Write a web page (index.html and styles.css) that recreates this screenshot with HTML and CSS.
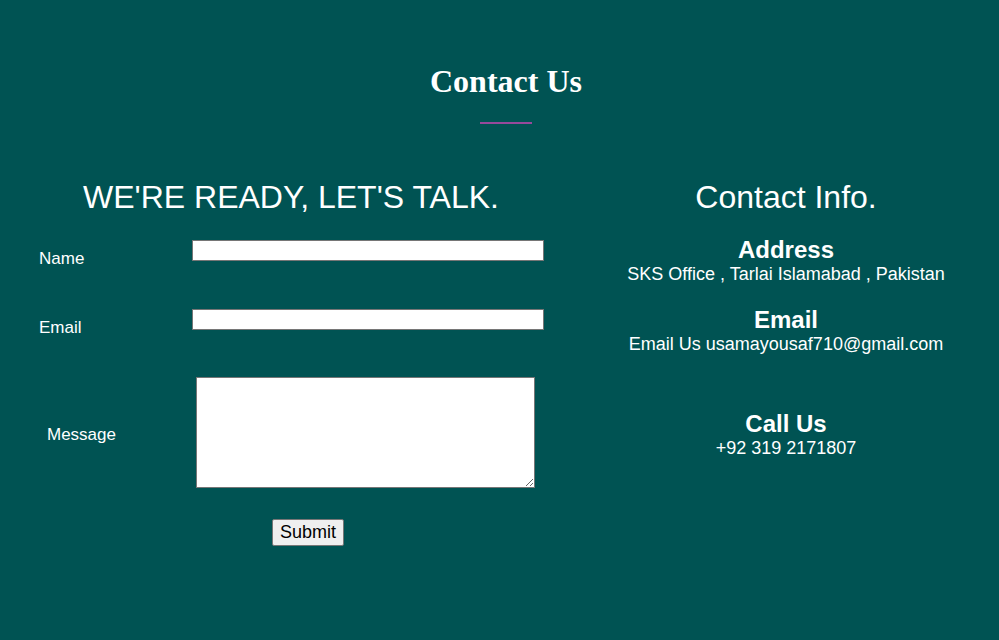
FILE: index.html
```html
<!DOCTYPE html>
<html lang="en">
<head>
<meta charset="utf-8">
<title>Contact Us</title>
<link rel="stylesheet" href="styles.css">
</head>
<body>
<section class="contact">
  <header class="intro">
    <h1 class="title">Contact Us</h1>
    <div class="underline"></div>
  </header>
  <div class="columns">
    <div class="form-col">
      <h2 class="col-heading">WE'RE READY, LET'S TALK.</h2>
      <form class="form">
        <div class="row row-name">
          <label class="label" for="name">Name</label>
          <input class="field" id="name" type="text">
        </div>
        <div class="row row-email">
          <label class="label" for="email">Email</label>
          <input class="field" id="email" type="text">
        </div>
        <div class="row row-message">
          <label class="label label-message" for="msg">Message</label>
          <textarea class="area" id="msg"></textarea>
        </div>
        <div class="row row-submit">
          <button class="submit" type="button">Submit</button>
        </div>
      </form>
    </div>
    <div class="info-col">
      <h2 class="col-heading">Contact Info.</h2>
      <div class="info info-address">
        <h3 class="info-title">Address</h3>
        <p class="info-text">SKS Office , Tarlai Islamabad , Pakistan</p>
      </div>
      <div class="info info-email">
        <h3 class="info-title">Email</h3>
        <p class="info-text">Email Us usamayousaf710@gmail.com</p>
      </div>
      <div class="info info-call">
        <h3 class="info-title">Call Us</h3>
        <p class="info-text">+92 319 2171807</p>
      </div>
    </div>
  </div>
</section>
</body>
</html>
```

FILE: styles.css
```css
html, body {
  margin: 0;
  padding: 0;
}
body {
  background: #005353;
  color: #ffffff;
  font-family: "Liberation Sans", Arial, sans-serif;
  width: 999px;
  height: 640px;
  overflow: hidden;
}
.contact {
  padding-top: 63px;
}
.intro {
  display: flex;
  flex-direction: column;
  align-items: center;
  padding-left: 13px;
}
.title {
  margin: 0;
  font-family: "Liberation Serif", "Times New Roman", serif;
  font-weight: bold;
  font-size: 32px;
  line-height: 37px;
}
.underline {
  width: 52px;
  height: 2px;
  background: #96499b;
  margin-top: 22px;
}
.columns {
  display: grid;
  grid-template-columns: 582px 408px;
  margin-top: 55px;
}
.col-heading {
  margin: 0;
  font-weight: normal;
  font-size: 32px;
  line-height: 37px;
  text-align: center;
}
.form {
  padding-left: 39px;
  margin-top: 24px;
}
.row {
  display: flex;
  align-items: flex-start;
}
.label {
  width: 153px;
  font-size: 17px;
  line-height: 19px;
  margin-top: 9px;
}
.row-name { height: 69px; }
.row-email { height: 68px; }
.field {
  box-sizing: border-box;
  width: 352px;
  height: 21px;
  margin: 0;
  border: 1px solid #767676;
  padding: 1px 2px;
  background: #fff;
}
.label-message {
  margin-top: 48px;
  padding-left: 8px;
  width: 149px;
}
.area {
  box-sizing: border-box;
  width: 339px;
  height: 111px;
  margin: 0;
  border: 1px solid #767676;
  padding: 2px;
  background: #fff;
  resize: both;
}
.row-submit {
  margin-top: 31px;
  padding-left: 233px;
}
.submit {
  box-sizing: border-box;
  width: 72px;
  height: 27px;
  margin: 0;
  padding: 0;
  font-family: "Liberation Sans", Arial, sans-serif;
  font-size: 18px;
  color: #000;
  background: #efefef;
  border: 1px solid #767676;
  border-radius: 2px;
}
.info {
  text-align: center;
}
.info-address { margin-top: 20px; }
.info-email { margin-top: 22px; }
.info-call { margin-top: 56px; }
.info-title {
  margin: 0;
  font-size: 24px;
  font-weight: bold;
  line-height: 28px;
}
.info-text {
  margin: 0;
  font-size: 18px;
  line-height: 20px;
}
```
